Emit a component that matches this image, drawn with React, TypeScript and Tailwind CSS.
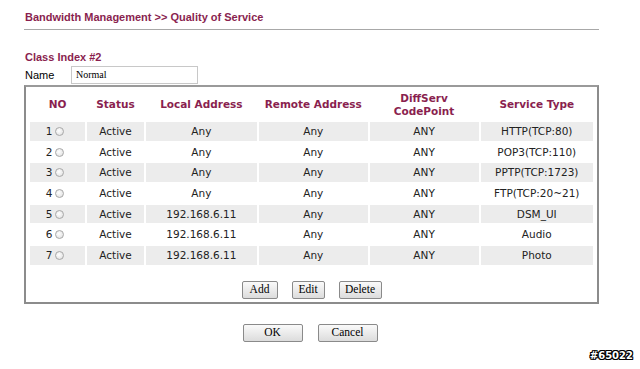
import React from "react";

const rows = [
  { no: 1, local: "Any", service: "HTTP(TCP:80)" },
  { no: 2, local: "Any", service: "POP3(TCP:110)" },
  { no: 3, local: "Any", service: "PPTP(TCP:1723)" },
  { no: 4, local: "Any", service: "FTP(TCP:20~21)" },
  { no: 5, local: "192.168.6.11", service: "DSM_UI" },
  { no: 6, local: "192.168.6.11", service: "Audio" },
  { no: 7, local: "192.168.6.11", service: "Photo" },
];

function Radio() {
  return (
    <span className="inline-block w-[9px] h-[9px] rounded-full border border-[#a8a8a8] bg-[radial-gradient(circle_at_40%_40%,#ffffff,#dcdcdc)] align-[-1px] ml-[3px]" />
  );
}

function Btn({ children, w }: { children: React.ReactNode; w: string }) {
  return (
    <button
      className={`${w} h-[18px] border border-[#8a8a8a] rounded-[2px] bg-[linear-gradient(#fafafa,#dcdcdc)] text-[11.5px] text-black leading-none`}
      style={{ fontFamily: '"Liberation Serif", "DejaVu Serif", serif' }}
    >
      {children}
    </button>
  );
}

export default function App() {
  const th = "text-[#8a1f4f] font-bold text-[10.5px] leading-[13px] align-middle text-center p-0";
  return (
    <div
      className="relative w-[640px] h-[369px] bg-white overflow-hidden"
      style={{ fontFamily: '"DejaVu Sans", Verdana, sans-serif' }}
    >
      <div className="pl-[25px] pt-[11px]">
        <div
          className="text-[11px] font-bold text-[#8a1f4f] leading-[12px]"
          style={{ fontFamily: '"Liberation Sans", Arial, sans-serif' }}
        >
          Bandwidth Management &gt;&gt; Quality of Service
        </div>
      </div>
      <div className="ml-[24px] mt-[6px] w-[575px] h-px bg-[#a8a8a8]" />

      <div
        className="pl-[25px] mt-[21px] text-[11px] font-bold text-[#8a1f4f] leading-[12px]"
        style={{ fontFamily: '"Liberation Sans", Arial, sans-serif' }}
      >
        Class Index #2
      </div>
      <div className="flex items-center pl-[25px] mt-[3px] h-[18px]">
        <span
          className="text-[11px] text-black w-[46px]"
          style={{ fontFamily: '"Liberation Sans", Arial, sans-serif' }}
        >
          Name
        </span>
        <div
          className="w-[127px] h-[18px] border border-[#c8c8c8] text-[10px] pl-[4px] leading-[16px] text-black"
          style={{ fontFamily: '"Liberation Serif", serif' }}
        >
          Normal
        </div>
      </div>

      <div className="ml-[24px] mt-px w-[575px] h-[219px] border-2 border-[#8c8c8c] border-t-[#9a9a9a] px-[2px]">
        <table className="border-separate border-spacing-[2px] text-[10.5px] text-[#222]">
          <thead>
            <tr className="h-[31px]">
              <th className={`${th} w-[56px]`}>NO</th>
              <th className={`${th} w-[57px]`}>Status</th>
              <th className={`${th} w-[112px]`}>Local Address</th>
              <th className={`${th} w-[110px]`}>Remote Address</th>
              <th className={`${th} w-[110px]`}>
                DiffServ
                <br />
                CodePoint
              </th>
              <th className={`${th} w-[113px]`}>Service Type</th>
            </tr>
          </thead>
          <tbody>
            {rows.map((r, i) => {
              const bg = i % 2 === 0 ? "bg-[#ececec]" : "bg-white";
              const td = `${bg} h-[18.67px] p-0 text-center align-middle leading-none`;
              return (
                <tr key={r.no}>
                  <td className={`${td} pr-[5px]`}>
                    {r.no}
                    <Radio />
                  </td>
                  <td className={td}>Active</td>
                  <td className={td}>{r.local}</td>
                  <td className={td}>Any</td>
                  <td className={td}>ANY</td>
                  <td className={td}>{r.service}</td>
                </tr>
              );
            })}
          </tbody>
        </table>
        <div className="flex justify-center gap-[14px] mt-[14px]">
          <Btn w="w-[36px]">Add</Btn>
          <Btn w="w-[33px]">Edit</Btn>
          <Btn w="w-[43px]">Delete</Btn>
        </div>
      </div>

      <div className="flex justify-center gap-[15px] mt-[20px] pr-[20px]">
        <Btn w="w-[60px]">OK</Btn>
        <Btn w="w-[60px]">Cancel</Btn>
      </div>

      <div
        className="absolute right-[7px] bottom-[6px] text-[10px] font-bold text-white"
        style={{
          fontFamily: '"DejaVu Sans", sans-serif',
          textShadow:
            "1px 0 0 #000, -1px 0 0 #000, 0 1px 0 #000, 0 -1px 0 #000, 1px 1px 0 #000, -1px -1px 0 #000, 1px -1px 0 #000, -1px 1px 0 #000",
        }}
      >
        #65022
      </div>
    </div>
  );
}
